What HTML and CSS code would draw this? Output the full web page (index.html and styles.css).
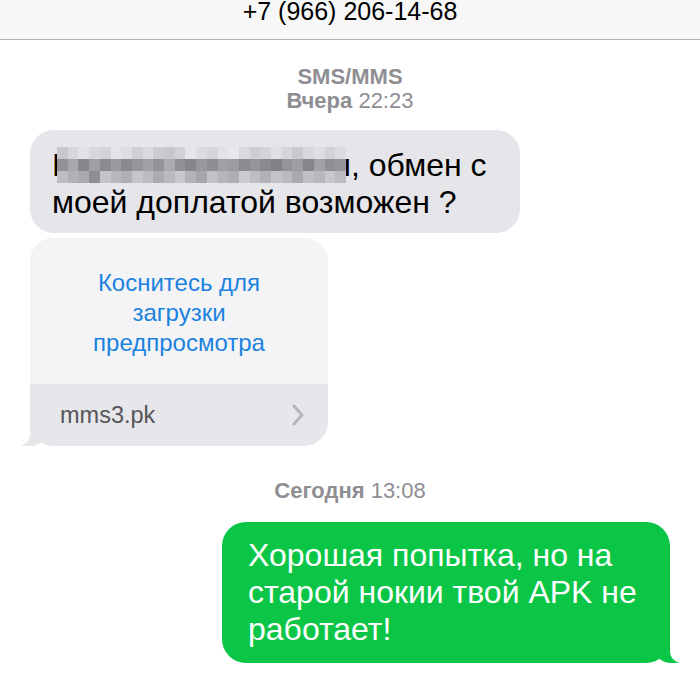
FILE: index.html
```html
<!DOCTYPE html>
<html lang="ru">
<head>
  <meta charset="UTF-8" />
  <meta name="viewport" content="width=device-width, initial-scale=1.0" />
  <title>Сообщения</title>
  <link rel="stylesheet" href="styles.css">
</head>
<body>
  <div class="header">+7 (966) 206-14-68</div>

  <div class="thread">
    <div class="stamp">
      <div class="service">SMS/MMS</div>
      <div><b>Вчера</b> 22:23</div>
    </div>

    <div class="bubble in">
      <span class="cut">К</span><span class="mosaic"><span class="mosaic-grid" id="mosaic"></span></span><span class="cut end">н</span>, обмен с<br>
      моей доплатой возможен ?
    </div>

    <div class="preview in tail">
      <div class="preview-top">Коснитесь для<br>загрузки<br>предпросмотра</div>
      <div class="preview-link">
        <span>mms3.pk</span>
        <svg class="chevron" width="12" height="22" viewBox="0 0 12 22">
          <polyline points="2,2 10,11 2,20" fill="none" stroke="#b5b5ba" stroke-width="3" stroke-linecap="round" stroke-linejoin="round"/>
        </svg>
      </div>
    </div>

    <div class="stamp today"><b>Сегодня</b> 13:08</div>

    <div class="bubble out tail">
      Хорошая попытка, но на<br>
      старой нокии твой APK не<br>
      работает!
    </div>
  </div>

  <script>
    // pixelated name, three rows of blocks
    const rows = [
      [200, 214, 226, 216, 212, 228, 222, 208, 218, 204, 200, 210, 230, 220, 214, 226, 232, 218, 206, 212, 224, 214, 202, 216, 222, 210, 220],
      [146, 168, 136, 160, 140, 154, 138, 150, 162, 148, 172, 144, 134, 152, 142, 160, 156, 140, 150, 138, 130, 148, 158, 134, 162, 144, 150],
      [190, 178, 170, 142, 196, 184, 176, 198, 188, 172, 186, 200, 180, 166, 194, 182, 174, 204, 190, 178, 196, 186, 170, 192, 184, 200, 188]
    ];
    const mosaic = document.getElementById("mosaic");
    rows.forEach(row => {
      row.forEach(v => {
        const cell = document.createElement("i");
        cell.style.background = `rgb(${v}, ${v}, ${v + 4})`;
        mosaic.appendChild(cell);
      });
    });
  </script>
</body>
</html>
```

FILE: styles.css
```css
body {
  margin: 0;
  font-family: "Liberation Sans", Arial, sans-serif;
  background: #fff;
  color: #000;
}
.header {
  height: 40px;
  background: #f7f7f7;
  border-bottom: 1px solid #b2b2b2;
  box-sizing: border-box;
  text-align: center;
  font-size: 25px;
  line-height: 22px;
}
.thread {
  display: flex;
  flex-direction: column;
  padding: 0 30px;
}
.stamp {
  text-align: center;
  color: #8e8e93;
  font-size: 22px;
  line-height: 24px;
  margin-top: 25px;
}
.stamp b,
.service {
  font-weight: bold;
}
.bubble {
  position: relative;
  font-size: 32px;
  line-height: 37px;
  white-space: nowrap;
  border-radius: 24px;
}
.in {
  align-self: flex-start;
}
.bubble.in {
  width: 490px;
  box-sizing: border-box;
  margin-top: 17px;
  padding: 17px 22px 12px;
  background: #e5e5ea;
}
.cut {
  display: inline-block;
  width: 5px;
  height: 37px;
  overflow: hidden;
  vertical-align: top;
}
.cut.end {
  direction: rtl;
}
.mosaic {
  display: inline-block;
  overflow: hidden;
  width: 289px;
  height: 36px;
  vertical-align: -7px;
}
.mosaic-grid {
  display: grid;
  grid-template-columns: repeat(27, 1fr);
  grid-template-rows: repeat(3, 12px);
}
.mosaic-grid i {
  display: block;
}
.preview {
  position: relative;
  width: 298px;
  margin-top: 5px;
  border-radius: 24px;
  background: #e6e6eb;
}
.preview-top {
  background: #f4f4f6;
  border-radius: 24px 24px 0 0;
  color: #1b82e0;
  text-align: center;
  font-size: 24px;
  line-height: 30px;
  padding: 30px 0 26px;
}
.preview-link {
  display: flex;
  align-items: center;
  justify-content: space-between;
  height: 62px;
  padding: 0 24px 0 30px;
  color: #55555a;
  font-size: 23.5px;
}
.today {
  margin-top: 33px;
}
.bubble.out {
  align-self: flex-end;
  width: 448px;
  box-sizing: border-box;
  margin-top: 19px;
  padding: 15px 20px 15px 26px;
  background: #0bc646;
  color: #fff;
}
.tail::before,
.tail::after {
  content: "";
  position: absolute;
  bottom: 0;
  height: 22px;
}
.in.tail::before {
  left: -8px;
  width: 24px;
  background: #e6e6eb;
  border-bottom-right-radius: 16px 14px;
}
.in.tail::after {
  left: -26px;
  width: 26px;
  background: #fff;
  border-bottom-right-radius: 12px;
}
.out.tail::before {
  right: -9px;
  width: 24px;
  background: #0bc646;
  border-bottom-left-radius: 16px 14px;
}
.out.tail::after {
  right: -26px;
  width: 26px;
  background: #fff;
  border-bottom-left-radius: 12px;
}
```
